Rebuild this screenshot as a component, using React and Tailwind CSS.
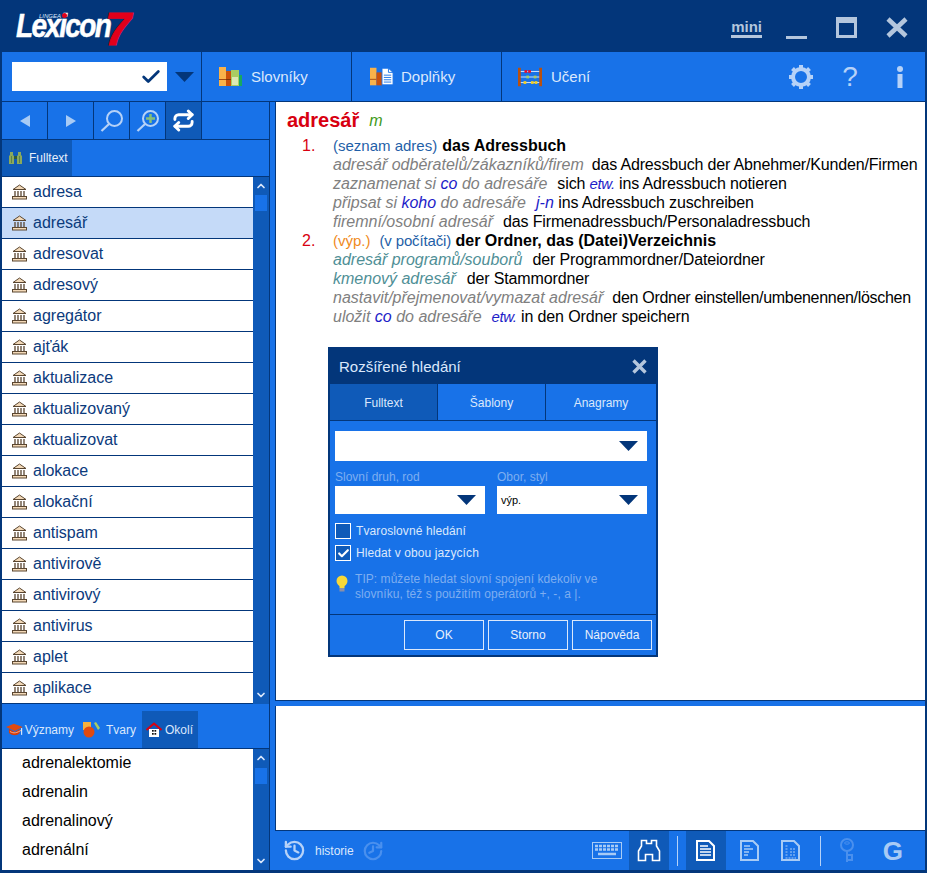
import React from "react";
import { Check, ChevronUp, ChevronDown, History, Repeat } from "lucide-react";

const Tri = ({ cls = "" }) => (
  <svg width="19" height="10" viewBox="0 0 19 10" className={cls}><path d="M0 0H19L9.5 10Z" fill="#03367a" /></svg>
);
const Books = () => (
  <svg width="24" height="20" viewBox="0 0 24 20">
    <rect x="0" y="0" width="7" height="19" fill="#f9b24a" /><rect x="0" y="12" width="7" height="1" fill="#a34a10" />
    <rect x="7" y="4" width="6" height="15" fill="#c9500c" /><rect x="7" y="12" width="6" height="1" fill="#7a3608" />
    <rect x="12" y="3" width="8" height="16" fill="#a9cc62" /><rect x="13" y="10" width="6" height="8" fill="#dce8b4" />
    <rect x="20" y="8" width="3" height="11" fill="#18a860" />
  </svg>
);
const Doplnky = () => (
  <svg width="26" height="20" viewBox="0 0 26 20">
    <rect x="0" y="0" width="7" height="19" fill="#f9b24a" /><rect x="0" y="12" width="7" height="1" fill="#a34a10" />
    <rect x="7" y="5" width="6" height="14" fill="#c9500c" />
    <path d="M13 0.5H20L25 5V18.5H13Z" fill="#fff" stroke="#1872e8" />
    <path d="M15 8H23M15 10.5H23M15 13H23M15 15.5H23" stroke="#1872e8" />
    <path d="M20 0.5V5H25" fill="none" stroke="#1872e8" />
  </svg>
);
const Abacus = () => (
  <svg width="26" height="20" viewBox="0 0 26 20">
    <rect x="0" y="0" width="3" height="20" fill="#b8500f" /><rect x="23" y="0" width="3" height="20" fill="#b8500f" />
    <path d="M3 4H23M3 10H23M3 16H23" stroke="#dbe8fc" />
    <rect x="7" y="2.5" width="3" height="3" fill="#e01030" /><rect x="11" y="2.5" width="3" height="3" fill="#e01030" />
    <rect x="9" y="8.500" width="3" height="3" fill="#a9cc62" /><rect x="17" y="8.500" width="3" height="3" fill="#a9cc62" />
    <rect x="6" y="14.500" width="3" height="3" fill="#f5d020" /><rect x="14" y="14.500" width="3" height="3" fill="#f5d020" /><rect x="18" y="14.500" width="3" height="3" fill="#f5d020" />
  </svg>
);
const Gear = () => (
  <svg width="26" height="26" viewBox="0 0 26 26" fill="none">
    <circle cx="13" cy="13" r="8" stroke="#b6d2f8" strokeWidth="4" />
    <path d="M13 1V5M13 21V25M1 13H5M21 13H25M4.500 4.500L7.300 7.300M18.700 18.700L21.500 21.500M21.500 4.500L18.700 7.300M7.300 18.700L4.500 21.500" stroke="#b6d2f8" strokeWidth="4" />
  </svg>
);
const Glass = ({ plus }) => (
  <svg width="24" height="24" viewBox="0 0 24 24" fill="none">
    {plus && <path d="M14.500 5V14M10 9.500H19" stroke="#86bf7a" strokeWidth="2.500" />}
    <circle cx="14.500" cy="9.500" r="7.500" stroke="#b6d2f8" strokeWidth="2" />
    <path d="M9 15L1.500 22" stroke="#b6d2f8" strokeWidth="2.200" />
  </svg>
);
const Temple = () => (
  <svg width="15" height="16" viewBox="0 0 15 16" className="shrink-0">
    <path d="M1 5.500L7.500 1L14 5.500Z" fill="#f3d9b8" stroke="#5a4630" strokeWidth="1" />
    <path d="M3 7V12M6 7V12M9 7V12M12 7V12" stroke="#5a4630" strokeWidth="1.300" />
    <rect x="0.500" y="12.500" width="14" height="2.500" fill="#f3d9b8" stroke="#5a4630" />
  </svg>
);
const Binoc = () => (
  <svg width="13" height="12" viewBox="0 0 13 12">
    <path d="M1 0H4V3L5 4V12H0V4L1 3Z" fill="#8aa95c" />
    <path d="M9 0H12V3L13 4V12H8V4L9 3Z" fill="#8aa95c" />
    <rect x="5" y="4" width="3" height="3" fill="#2f5a3a" />
    <path d="M2.500 4V11M10.500 4V11" stroke="#2f5a3a" strokeWidth="1" opacity="0.5" />
  </svg>
);
const Doc = ({ lines, active }) => {
  const c = active ? "#ffffff" : "#a8cbf5";
  return (
    <svg width="19" height="21" viewBox="0 0 19 21" fill="none">
      <path d="M1 1H13L18 6V20H1Z" stroke={c} strokeWidth="2" />
      {lines === "dots"
        ? <path d="M4.500 6H7M4.500 9H7M9 9H15M4.500 12H7M9 12H15M4.500 15H7M9 15H15M4.500 18H15" stroke={c} strokeDasharray="2 1" />
        : <path d={active ? "M4 6H12M4 9H15M4 12H15M4 15H15" : "M4 6H10M4 9H13M4 12H9M4 15H8"} stroke={c} strokeWidth={active ? 1.500 : 1.300} />}
    </svg>
  );
};
const KeyboardIcon = () => (
  <svg width="30" height="17" viewBox="0 0 30 17" fill="none">
    <rect x="0.500" y="0.500" width="29" height="16" stroke="#a8cbf5" />
    <path d="M3 4H27M3 7.500H27" stroke="#a8cbf5" strokeWidth="2.500" strokeDasharray="3 1" />
    <path d="M6 12H24" stroke="#a8cbf5" strokeWidth="2.500" />
  </svg>
);
const BinocOutline = () => (
  <svg width="24" height="23" viewBox="0 0 24 23" fill="none">
    <path d="M4.500 1.500H9.500V4.500H14.500V1.500H19.500V7L22.500 12V21.500H15.500V15.500H8.500V21.500H1.500V12L4.500 7Z" stroke="#fff" strokeWidth="1.600" />
  </svg>
);
const KeyIcon = () => (
  <svg width="17" height="25" viewBox="0 0 17 25" fill="none">
    <circle cx="8" cy="7" r="6" stroke="#4a90ee" strokeWidth="2" />
    <ellipse cx="8" cy="5" rx="2.500" ry="1.200" stroke="#4a90ee" />
    <path d="M8 13V24M8 17H13V22H8" stroke="#4a90ee" strokeWidth="2" />
  </svg>
);
const Hat = () => (
  <svg width="18" height="14" viewBox="0 0 18 14"><path d="M0 4L8 0.500L17 4L9 8Z" fill="#e04a10" /><path d="M3 6V10C7 13 11 13 14 10V6L9 9Z" fill="#d83c08" /><path d="M4 8.500C8 11 11 10 16 7" stroke="#f4b090" fill="none" /><path d="M16 5V12" stroke="#fff" /></svg>
);
const Shapes = () => (
  <svg width="18" height="16" viewBox="0 0 18 16"><rect x="0" y="0" width="8" height="8" fill="#f6b03c" /><path d="M11 1L13 0L17 6L15 8Z" fill="#a9cc62" /><circle cx="6" cy="10" r="5.500" fill="#e04a10" /></svg>
);
const House = () => (
  <svg width="16" height="16" viewBox="0 0 16 16"><path d="M3 7H13V15H3Z" fill="#fff" /><path d="M0.500 8L8 1.500L15.500 8" fill="none" stroke="#d80010" strokeWidth="2" /><rect x="6" y="8" width="1.700" height="1.700" fill="#111" /><rect x="8.500" y="8" width="1.700" height="1.700" fill="#111" /><rect x="6" y="11" width="1.700" height="1.700" fill="#111" /><rect x="8.500" y="11" width="1.700" height="1.700" fill="#111" /></svg>
);
const Bulb = () => (
  <svg width="14" height="18" viewBox="0 0 14 18"><circle cx="7" cy="6" r="5.500" fill="#f8d838" /><path d="M4.500 10H9.500V13H4.500Z" fill="#f8d838" /><rect x="4.500" y="13" width="5" height="3.500" fill="#8a8fa8" /></svg>
);

const Scrollbar = ({ thumbTop }) => (
  <div className="w-[16px] shrink-0 bg-[#0f5ab8] flex flex-col items-center justify-between py-[3px]">
    <div className="flex flex-col items-center">
      <ChevronUp size={12} strokeWidth={3.500} color="#dbe8fc" />
      <div className={`w-[12px] h-[16px] bg-[#1872e8] ${thumbTop}`} />
    </div>
    <ChevronDown size={12} strokeWidth={3.500} color="#dbe8fc" />
  </div>
);

const words = ["adresa","adresář","adresovat","adresový","agregátor","ajťák","aktualizace","aktualizovaný","aktualizovat","alokace","alokační","antispam","antivirově","antivirový","antivirus","aplet","aplikace"];
const near = ["adrenalektomie","adrenalin","adrenalinový","adrenální"];

const Tab = ({ icon, label, iconCls }) => (
  <div className="w-[150px] h-full border-r border-[#03367a] flex items-center pl-[16px] gap-[9px] text-[15px] text-[#dbe8fc]">
    <span className={`w-[24px] flex justify-center pt-[1px] ${iconCls}`}>{icon}</span><span className="pt-[2px]">{label}</span>
  </div>
);
const NavBtn = ({ w, active, children }) => (
  <div className={`${w} h-full border-r border-[#03367a] flex items-center justify-center ${active ? "bg-[#0f5ab8]" : ""}`}>{children}</div>
);
const Ex = ({ children, teal }) => <span className={`italic ${teal ? "text-[#4f8f96]" : "text-[#808080]"}`}>{children}</span>;
const Bl = ({ children, small }) => <span className={`italic text-[#1d1dc8] ${small ? "text-[15px] tracking-[-0.4px]" : ""}`}>{children}</span>;
const R = ({ children, cls = "tracking-[-0.14px]" }) => <span className={`text-black ${cls}`}>{children}</span>;
const Gl = ({ children, cls = "ml-[9px]" }) => <span className={`${cls} text-[15px] text-[#1f5fa8] tracking-[-0.15px]`}>{children}</span>;

const Line = ({ num, children }) => (
  <div className="flex h-[19px] whitespace-nowrap">
    <span className="w-[46px] shrink-0 pl-[15px] text-[#d80010]">{num}</span>
    <div>{children}</div>
  </div>
);

export default function App() {
  return (
    <div className="relative w-[927px] h-[873px] overflow-hidden bg-[#03367a] flex flex-col font-['Liberation_Sans',Arial,sans-serif]">
      {/* title bar */}
      <div className="h-[52px] shrink-0 flex items-start justify-between">
        <div className="relative ml-[16px] mt-[12px] w-[114px] h-[36px] text-white italic font-bold">
          <span className="absolute left-0 top-[1px] origin-left scale-x-[0.85] text-[33px] leading-[25px] tracking-[-2px] [-webkit-text-stroke:0.5px_white]">Lexicon</span>
          <span className="absolute left-[89px] top-0 text-[#e2001a] text-[47px] leading-[34px] [-webkit-text-stroke:1px_#e2001a]">7</span>
          <span className="absolute left-[23px] top-[1px] text-[6px] leading-[6px] font-normal text-[#dbe8fc]">LINGEA</span>
          <span className="absolute left-[46px] top-[1px] w-[5px] h-[5px] rounded-full bg-[#e2001a]" />
        </div>
        <div className="flex items-center text-[#b4c6dd] mr-[19px] mt-[15px] h-[25px]">
          <span className="text-[15px] font-bold border-b-[3px] border-[#b4c6dd] leading-[14px] pb-[1px] mr-[24px] mt-[2px]">mini</span>
          <span className="w-[21px] h-[3px] bg-[#b4c6dd] mr-[29px] mt-[19px]" />
          <span className="w-[21px] h-[21px] border-[3px] border-t-[6px] border-[#b4c6dd] mr-[29px]" />
          <svg width="22" height="21" viewBox="0 0 22 21"><path d="M2 2L20 19M20 2L2 19" stroke="#b4c6dd" strokeWidth="4.500" /></svg>
        </div>
      </div>

      <div className="flex-1 min-h-0 mx-[2px] mb-[3px] bg-[#1872e8] flex flex-col">
        {/* toolbar */}
        <div className="h-[50px] shrink-0 border-b border-[#03367a] flex items-center">
          <div className="w-[200px] h-full border-r border-[#03367a] flex items-center pl-[10px]">
            <div className="w-[155px] h-[29px] bg-white flex items-center justify-end pr-[5px]">
              <Check size={22} strokeWidth={3} color="#03367a" />
            </div>
            <Tri cls="ml-[8px]" />
          </div>
          <Tab icon={<Books />} label="Slovníky" iconCls="ml-[1px] mr-[-1px]" />
          <Tab icon={<Doplnky />} label="Doplňky" iconCls="ml-[2px] mr-[-2px]" />
          <div className="w-[150px] h-full flex items-center pl-[16px] gap-[9px] text-[15px] text-[#dbe8fc]">
            <span className="w-[24px] flex justify-center pt-[1px]"><Abacus /></span><span className="pt-[2px]">Učení</span>
          </div>
          <div className="ml-auto flex items-center mr-[21px] text-[#b6d2f8]">
            <Gear />
            <span className="text-[28px] w-[16px] ml-[28px] mr-[38px] leading-none text-center">?</span>
            <svg width="8" height="22" viewBox="0 0 8 22"><circle cx="4" cy="3" r="3" fill="#b6d2f8" /><rect x="1.500" y="8" width="5" height="14" fill="#b6d2f8" /></svg>
          </div>
        </div>

        <div className="flex-1 min-h-0 flex">
          {/* left */}
          <div className="w-[268px] shrink-0 border-r border-[#03367a] flex flex-col">
            <div className="h-[38px] shrink-0 border-b border-[#03367a] flex">
              <NavBtn w="w-[46px]"><svg width="10" height="12" viewBox="0 0 10 12"><path d="M10 0V12L0 6Z" fill="#a8cbf5" /></svg></NavBtn>
              <NavBtn w="w-[46px]"><svg width="10" height="12" viewBox="0 0 10 12"><path d="M0 0V12L10 6Z" fill="#a8cbf5" /></svg></NavBtn>
              <NavBtn w="w-[36px]"><Glass /></NavBtn>
              <NavBtn w="w-[36px]"><Glass plus /></NavBtn>
              <NavBtn w="w-[36px]" active><Repeat size={23} strokeWidth={3} color="#fff" /></NavBtn>
            </div>
            <div className="h-[37px] shrink-0 border-b border-[#03367a] flex">
              <div className="w-[70px] h-full bg-[#0f5ab8] flex items-center pl-[7px] gap-[7px] text-[12px] text-[#e8f0fc]"><Binoc /><span>Fulltext</span></div>
            </div>
            <div className="h-[527px] shrink-0 flex">
              <div className="flex-1 min-w-0 bg-white">
                {words.map((w, i) => (
                  <div key={w} className={`h-[31px] border-b border-[#03367a] flex items-center pl-[10px] gap-[6px] text-[16px] text-[#0b3a7c] ${i === 1 ? "bg-[#c5daf8]" : ""}`}>
                    <Temple /><span>{w}</span>
                  </div>
                ))}
              </div>
              <Scrollbar thumbTop="mt-[3px]" />
            </div>
            <div className="h-[45px] shrink-0 border-b border-[#03367a] flex items-end pl-[2px] text-[12px] text-[#dbe8fc]">
              <div className="h-[37px] flex items-center w-[70px] gap-[1px] pl-[2px]"><Hat /><span>Významy</span></div>
              <div className="h-[37px] flex items-center w-[68px] gap-[5px] pl-[9px]"><Shapes /><span>Tvary</span></div>
              <div className="h-[37px] flex items-center w-[56px] gap-[3px] pl-[4px] bg-[#0f5ab8]"><House /><span>Okolí</span></div>
            </div>
            <div className="flex-1 min-h-0 flex">
              <div className="flex-1 min-w-0 bg-white pl-[20px] text-[16px] text-black">
                {near.map((w) => <div key={w} className="h-[29px] flex items-center first:mt-[-1px]">{w}</div>)}
              </div>
              <Scrollbar thumbTop="mt-[4px]" />
            </div>
          </div>

          {/* right */}
          <div className="flex-1 min-w-0 pl-[5px] flex flex-col">
            <div className="h-[599px] shrink-0 bg-white border-l border-b border-[#03367a] pl-[11px] pt-[5px] text-[16px] leading-[19px]">
              <div className="h-[26px] flex items-center">
                <span className="text-[20px] font-bold text-[#d80010]">adresář</span>
                <span className="italic text-[#3f9a1a] ml-[10px]">m</span>
              </div>
              <div className="mt-[3px]">
                <Line num="1."><span className="text-[15px] text-[#1f5fa8]">(seznam adres)</span><b className="text-black ml-[5px]">das Adressbuch</b></Line>
                <Line><Ex>adresář odběratelů/zákazníků/firem</Ex><span className="ml-[8px]"><R cls="tracking-[-0.17px]">das Adressbuch der Abnehmer/Kunden/Firmen</R></span></Line>
                <Line><Ex>zaznamenat si </Ex><Bl>co</Bl><Ex> do adresáře</Ex><span className="ml-[10px]"><R>sich </R></span><Bl small>etw.</Bl> <R>ins Adressbuch notieren</R></Line>
                <Line><Ex>připsat si </Ex><Bl>koho</Bl><Ex> do adresáře</Ex><span className="ml-[10px]"><Bl>j-n</Bl></span> <R>ins Adressbuch zuschreiben</R></Line>
                <Line><Ex>firemní/osobní adresář</Ex><span className="ml-[10px]"><R cls="tracking-[-0.15px]">das Firmenadressbuch/Personaladressbuch</R></span></Line>
                <Line num="2."><span className="text-[15px] text-[#f08a1c]">(výp.)</span><Gl>(v počítači)</Gl> <b className="text-black">der Ordner, das (Datei)Verzeichnis</b></Line>
                <Line><Ex teal>adresář programů/souborů</Ex><span className="ml-[10px]"><R>der Programmordner/Dateiordner</R></span></Line>
                <Line><Ex teal>kmenový adresář</Ex><span className="ml-[11px]"><R>der Stammordner</R></span></Line>
                <Line><Ex>nastavit/přejmenovat/vymazat adresář</Ex><span className="ml-[9px]"><R cls="tracking-[-0.3px]">den Ordner einstellen/umbenennen/löschen</R></span></Line>
                <Line><Ex>uložit </Ex><Bl>co</Bl><Ex> do adresáře</Ex><span className="ml-[10px]"><Bl small>etw.</Bl></span> <R>in den Ordner speichern</R></Line>
              </div>
            </div>
            <div className="h-[5px] shrink-0" />
            <div className="h-[125px] shrink-0 bg-white border-l border-b border-[#03367a]" />
            <div className="flex-1 min-h-0 flex items-center text-[12px] text-[#dbe8fc]">
              <History size={23} strokeWidth={2.400} color="#b6d2f8" className="ml-[8px]" />
              <span className="ml-[9px]">historie</span>
              <History size={22} strokeWidth={2.400} color="#4a90ee" className="ml-[8px] -scale-x-100" />
              <span className="ml-[208px] flex"><KeyboardIcon /></span>
              <div className="w-[40px] h-full bg-[#0f5ab8] ml-[7px] flex items-center justify-center"><BinocOutline /></div>
              <div className="w-px h-[30px] bg-[#b6d2f8] ml-[8px]" />
              <div className="w-[40px] h-full bg-[#0f5ab8] ml-[8px] flex items-center justify-center"><Doc active /></div>
              <div className="w-[19px] ml-[14px] flex"><Doc /></div>
              <div className="w-[19px] ml-[22px] flex"><Doc lines="dots" /></div>
              <div className="w-px h-[30px] bg-[#b6d2f8] ml-[20px]" />
              <span className="ml-[18px] flex"><KeyIcon /></span>
              <span className="ml-[27px] text-[26px] font-bold text-[#a8cbf5] leading-none">G</span>
            </div>
          </div>
        </div>
      </div>

      {/* dialog overlay */}
      <div className="absolute left-[328px] top-[347px] w-[330px] h-[310px] border-2 border-[#03367a] bg-[#1872e8] flex flex-col text-[12px] text-[#dbe8fc]">
        <div className="h-[35px] shrink-0 bg-[#03367a] flex items-center justify-between px-[9px] text-[15px]">
          <span className="pt-[1px]">Rozšířené hledání</span>
          <svg width="15" height="15" viewBox="0 0 15 15"><path d="M1.500 1.500L13.500 13.500M13.500 1.500L1.500 13.500" stroke="#b4c6dd" strokeWidth="3.400" /></svg>
        </div>
        <div className="h-[37px] shrink-0 border-b border-[#03367a] flex text-center">
          <div className="w-[108px] flex items-center justify-center bg-[#0f5ab8] border-r border-[#03367a] pt-[2px]">Fulltext</div>
          <div className="w-[108px] flex items-center justify-center border-r border-[#03367a] pt-[2px]">Šablony</div>
          <div className="flex-1 flex items-center justify-center pt-[2px]">Anagramy</div>
        </div>
        <div className="flex-1 min-h-0 px-[5px] pt-[10px]">
          <div className="w-[312px] h-[30px] bg-white flex items-center justify-end pr-[9px]"><Tri /></div>
          <div className="flex gap-[12px] mt-[7px] text-[#7eaef0]">
            <span className="w-[150px]">Slovní druh, rod</span><span>Obor, styl</span>
          </div>
          <div className="flex gap-[12px]">
            <div className="w-[150px] h-[28px] bg-white flex items-center justify-end pr-[9px]"><Tri /></div>
            <div className="w-[150px] h-[28px] bg-white flex items-center justify-between pl-[4px] pr-[9px] text-black text-[11px]"><span>výp.</span><Tri /></div>
          </div>
          <div className="flex items-center gap-[5px] mt-[8px] tracking-[0.1px]">
            <span className="w-[16px] h-[16px] border border-white bg-[#0f5ab8]" /><span>Tvaroslovné hledání</span>
          </div>
          <div className="flex items-center gap-[5px] mt-[4px] tracking-[0.1px]">
            <span className="w-[16px] h-[16px] border border-white bg-[#0f5ab8] flex items-center justify-center"><Check size={13} strokeWidth={4} color="#fff" /></span><span>Hledat v obou jazycích</span>
          </div>
          <div className="flex items-start gap-[6px] mt-[10px] text-[#7eaef0] leading-[15px] tracking-[0.05px]">
            <span className="mt-[3px] flex"><Bulb /></span>
            <span className="whitespace-pre-line">{"TIP: můžete hledat slovní spojení kdekoliv ve\nslovníku, též s použitím operátorů +, -,  a |."}</span>
          </div>
        </div>
        <div className="h-[41px] shrink-0 border-t border-[#03367a] flex items-start justify-end gap-[4px] pr-[4px] pt-[5px] text-[#e8f0fc]">
          {["OK","Storno","Nápověda"].map((b) => (
            <div key={b} className="w-[80px] h-[30px] border border-[#dbe8fc] flex items-center justify-center">{b}</div>
          ))}
        </div>
      </div>
    </div>
  );
}
